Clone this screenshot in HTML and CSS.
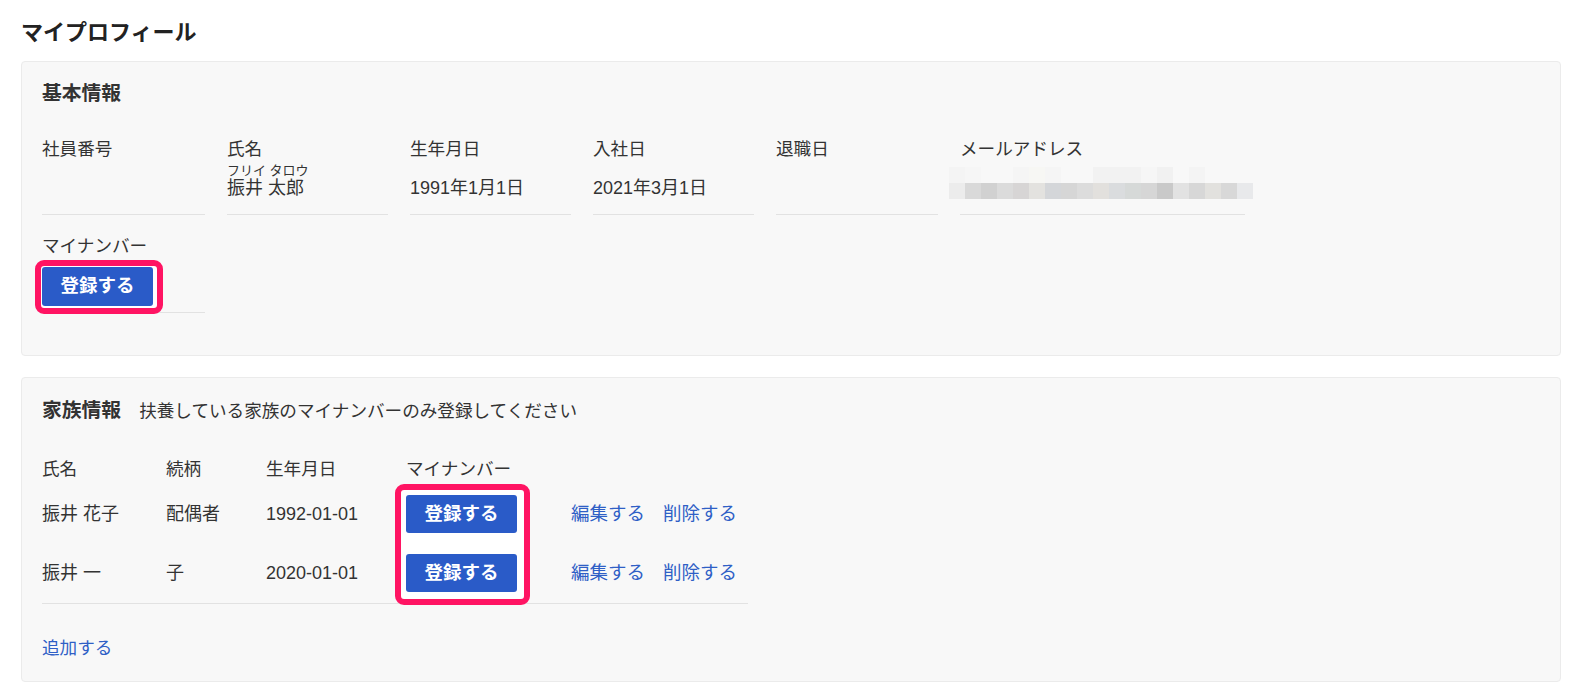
FILE: index.html
```html
<!DOCTYPE html>
<html lang="ja">

<head>
    <meta charset="UTF-8">
    <meta name="viewport" content="width=device-width, initial-scale=1.0">
    <title>マイプロフィール</title>
    <link rel="stylesheet" href="styles.css">
</head>

<body>
    <div class="page">
        <h1 class="page-title">マイプロフィール</h1>

        <!-- 基本情報 -->
        <section class="card">
            <h2 class="card-title">基本情報</h2>
            <div class="fields">
                <div class="field">
                    <div class="field-label">社員番号</div>
                    <div class="field-value"></div>
                </div>
                <div class="field">
                    <div class="field-label">氏名</div>
                    <div class="field-value">
                        <span class="kana">フリイ タロウ</span>
                        <span>振井 太郎</span>
                    </div>
                </div>
                <div class="field">
                    <div class="field-label">生年月日</div>
                    <div class="field-value">1991年1月1日</div>
                </div>
                <div class="field">
                    <div class="field-label">入社日</div>
                    <div class="field-value">2021年3月1日</div>
                </div>
                <div class="field">
                    <div class="field-label">退職日</div>
                    <div class="field-value"></div>
                </div>
                <div class="field">
                    <div class="field-label">メールアドレス</div>
                    <div class="field-value">
                        <span class="email-mask"></span>
                    </div>
                </div>
                <div class="field">
                    <div class="field-label">マイナンバー</div>
                    <div class="field-value with-button">
                        <span class="mark mark-self"></span>
                        <button class="btn btn-self">登録する</button>
                    </div>
                </div>
            </div>
        </section>

        <!-- 家族情報 -->
        <section class="card card-family">
            <div class="card-head">
                <h2 class="card-title">家族情報</h2>
                <span class="card-note">扶養している家族のマイナンバーのみ登録してください</span>
            </div>

            <div class="family-table">
                <span class="mark mark-family"></span>
                <div class="family-row family-head">
                    <div>氏名</div>
                    <div>続柄</div>
                    <div>生年月日</div>
                    <div>マイナンバー</div>
                    <div></div>
                </div>
                <div class="family-row">
                    <div>振井 花子</div>
                    <div>配偶者</div>
                    <div>1992-01-01</div>
                    <div><button class="btn">登録する</button></div>
                    <div class="row-links">
                        <a href="#">編集する</a>
                        <a href="#">削除する</a>
                    </div>
                </div>
                <div class="family-row">
                    <div>振井 一</div>
                    <div>子</div>
                    <div>2020-01-01</div>
                    <div><button class="btn">登録する</button></div>
                    <div class="row-links">
                        <a href="#">編集する</a>
                        <a href="#">削除する</a>
                    </div>
                </div>
            </div>

            <a href="#" class="add-link">追加する</a>
        </section>
    </div>
</body>

</html>
```

FILE: styles.css
```css
body {
    margin: 0;
    font-family: "Liberation Sans", "Noto Sans CJK JP", sans-serif;
    font-size: 17.6px;
    color: #333;
    background-color: white;
}

.page {
    padding: 18px 16px 0 21px;
}

.page-title {
    margin: 0 0 13px;
    font-size: 22px;
    line-height: 30px;
    font-weight: bold;
    color: #222;
}

.card {
    background-color: #f8f8f8;
    border: 1px solid #ebebeb;
    border-radius: 4px;
    padding: 17px 20px 42px;
    margin-bottom: 21px;
}

.card-title {
    margin: 0;
    font-size: 19.8px;
    line-height: 28px;
    font-weight: bold;
}

/* 基本情報 */
.fields {
    display: grid;
    grid-template-columns: 163px 161px 161px 161px 162px 285px;
    column-gap: 22px;
    row-gap: 18px;
    margin-top: 29px;
}

.field-label {
    line-height: 26px;
}

.field-value {
    position: relative;
    display: flex;
    flex-direction: column;
    justify-content: flex-end;
    box-sizing: border-box;
    min-height: 53px;
    padding-bottom: 16px;
    border-bottom: 1px solid #e2e2e2;
    font-size: 18px;
    line-height: 20px;
}

.field-value.with-button {
    justify-content: flex-start;
    padding: 8px 0 6px;
}

.kana {
    font-size: 13px;
    line-height: 14px;
}

.email-mask {
    display: block;
    width: 304px;
    height: 32px;
    margin: 0 0 -1px -11px;
    background-repeat: no-repeat;
    background-size: 100% 16px;
    background-position: 0 0, 0 16px;
    background-image:
        linear-gradient(to right,
            #f4f4f4 0 16px, #f6f6f6 16px 32px, #f8f8f8 32px 64px, #f5f5f5 64px 80px,
            #f7f7f4 80px 96px, #f5f5f5 96px 112px, #f8f8f8 112px 144px, #f2f2f2 144px 192px,
            #f6f6f6 192px 208px, #f1f1f1 208px 224px, #f8f8f8 224px 240px, #f4f4f4 240px 256px,
            #f8f8f8 256px 304px),
        linear-gradient(to right,
            #ececec 0 16px, #d9d9d9 16px 32px, #d1d1d1 32px 48px, #dbdbdb 48px 64px,
            #d7d5d5 64px 80px, #e3e2df 80px 96px, #d4d6d9 96px 112px, #d6d6d6 112px 128px,
            #dcdcdc 128px 144px, #e2e0dd 144px 160px, #dadcde 160px 176px, #d6d9d8 176px 192px,
            #d6d6d6 192px 208px, #c9c9c9 208px 224px, #e2e2e2 224px 240px, #d7d7d7 240px 256px,
            #e2e1de 256px 272px, #d8d8d8 272px 288px, #e8e9eb 288px 304px);
}

/* ボタン */
.btn {
    position: relative;
    z-index: 1;
    width: 111px;
    height: 38px;
    padding: 0;
    border: none;
    border-radius: 3px;
    background-color: #2a5bc8;
    color: white;
    font-family: "Liberation Sans", "Noto Sans CJK JP", sans-serif;
    font-size: 18.5px;
    font-weight: bold;
    line-height: 1;
    cursor: pointer;
}

.btn-self {
    height: 39px;
}

/* 赤枠の注釈 */
.mark {
    position: absolute;
    box-sizing: border-box;
    border: 6px solid #ff1463;
    border-radius: 9px;
    background-color: white;
}

.mark-self {
    left: -7px;
    top: 1px;
    width: 128px;
    height: 54px;
}

.mark-family {
    left: 353px;
    top: 28px;
    width: 135px;
    height: 121px;
}

/* 家族情報 */
.card-family {
    padding-bottom: 20px;
}

.card-head {
    display: flex;
    align-items: baseline;
    gap: 18px;
    margin-top: 1px;
    line-height: 28px;
}

.family-table {
    position: relative;
    width: 706px;
    margin-top: 31px;
    border-bottom: 1px solid #e2e2e2;
}

.family-row {
    display: grid;
    grid-template-columns: 124px 100px 140px 165px auto;
    align-items: center;
    padding: 10px 0 11px;
    font-size: 18px;
    line-height: 26px;
}

.family-row.family-head {
    padding: 0 0 3px;
    font-size: 17.6px;
}

.family-row .btn {
    display: block;
}

.row-links {
    display: flex;
    gap: 18px;
    font-size: 18.5px;
}

a {
    color: #2f5fc6;
    text-decoration: none;
}

.add-link {
    display: inline-block;
    margin-top: 31px;
    line-height: 26px;
}
```
